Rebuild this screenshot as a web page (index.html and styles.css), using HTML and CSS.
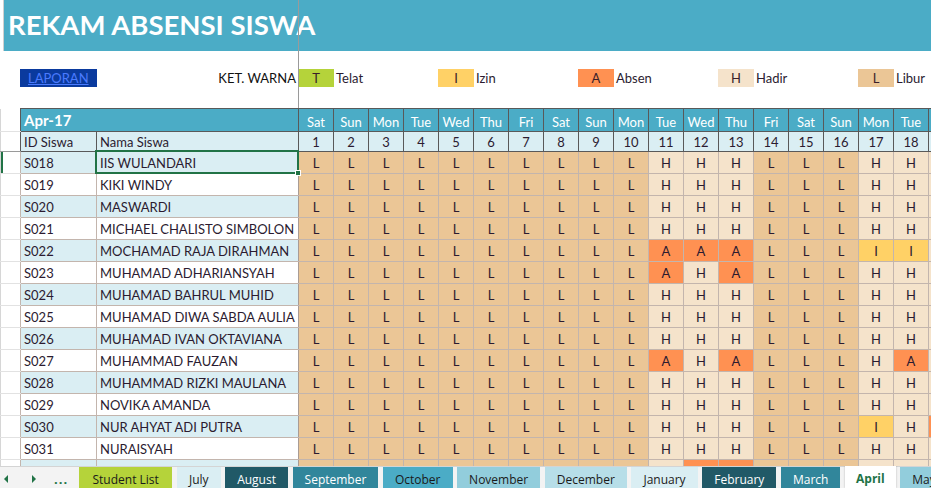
FILE: index.html
```html
<!DOCTYPE html>
<html>
<head>
<meta charset="utf-8">
<link rel="stylesheet" href="styles.css">
</head>
<body>
<div class="sheet">
  <div class="banner"><h1 class="title">REKAM ABSENSI SISWA</h1></div>
  <div class="legend">
    <span class="gutcell"></span>
    <span class="report"><a href="#">LAPORAN</a></span>
    <span class="ket">KET. WARNA</span>
    <span class="sw t">T</span><span class="lbl">Telat</span>
    <span class="sw i">I</span><span class="lbl">Izin</span>
    <span class="sw a">A</span><span class="lbl">Absen</span>
    <span class="sw h">H</span><span class="lbl">Hadir</span>
    <span class="sw l">L</span><span class="lbl">Libur</span>
  </div>
  <div class="gridwrap">
  <table class="grid">
    <colgroup>
      <col class="c-gut"><col class="c-id"><col class="c-name">
      <col class="c-day"><col class="c-day"><col class="c-day"><col class="c-day"><col class="c-day"><col class="c-day"><col class="c-day"><col class="c-day"><col class="c-day"><col class="c-day"><col class="c-day"><col class="c-day"><col class="c-day"><col class="c-day"><col class="c-day"><col class="c-day"><col class="c-day"><col class="c-day"><col class="c-day">
    </colgroup>
    <thead>
      <tr class="r-month">
        <td class="gut"></td><th colspan="2" class="month">Apr-17</th>
        <th class="dow">Sat</th><th class="dow">Sun</th><th class="dow">Mon</th><th class="dow">Tue</th><th class="dow">Wed</th><th class="dow">Thu</th><th class="dow">Fri</th><th class="dow">Sat</th><th class="dow">Sun</th><th class="dow">Mon</th><th class="dow">Tue</th><th class="dow">Wed</th><th class="dow">Thu</th><th class="dow">Fri</th><th class="dow">Sat</th><th class="dow">Sun</th><th class="dow">Mon</th><th class="dow">Tue</th><th class="dow">Wed</th>
      </tr>
      <tr class="r-sub">
        <td class="gut gut-freeze"></td><th class="sub">ID Siswa</th><th class="sub">Nama Siswa</th>
        <th class="num">1</th><th class="num">2</th><th class="num">3</th><th class="num">4</th><th class="num">5</th><th class="num">6</th><th class="num">7</th><th class="num">8</th><th class="num">9</th><th class="num">10</th><th class="num">11</th><th class="num">12</th><th class="num">13</th><th class="num">14</th><th class="num">15</th><th class="num">16</th><th class="num">17</th><th class="num">18</th><th class="num">19</th>
      </tr>
    </thead>
    <tbody>
      <tr class="blue"><td class="gut sel-row"></td><td class="id">S018</td><td class="name">IIS WULANDARI</td>
        <td class="l">L</td><td class="l">L</td><td class="l">L</td><td class="l">L</td><td class="l">L</td><td class="l">L</td><td class="l">L</td><td class="l">L</td><td class="l">L</td><td class="l">L</td><td class="h">H</td><td class="h">H</td><td class="h">H</td><td class="l">L</td><td class="l">L</td><td class="l">L</td><td class="h">H</td><td class="h">H</td><td class="h">H</td></tr>
      <tr class="white"><td class="gut"></td><td class="id">S019</td><td class="name">KIKI WINDY</td>
        <td class="l">L</td><td class="l">L</td><td class="l">L</td><td class="l">L</td><td class="l">L</td><td class="l">L</td><td class="l">L</td><td class="l">L</td><td class="l">L</td><td class="l">L</td><td class="h">H</td><td class="h">H</td><td class="h">H</td><td class="l">L</td><td class="l">L</td><td class="l">L</td><td class="h">H</td><td class="h">H</td><td class="h">H</td></tr>
      <tr class="blue"><td class="gut"></td><td class="id">S020</td><td class="name">MASWARDI</td>
        <td class="l">L</td><td class="l">L</td><td class="l">L</td><td class="l">L</td><td class="l">L</td><td class="l">L</td><td class="l">L</td><td class="l">L</td><td class="l">L</td><td class="l">L</td><td class="h">H</td><td class="h">H</td><td class="h">H</td><td class="l">L</td><td class="l">L</td><td class="l">L</td><td class="h">H</td><td class="h">H</td><td class="h">H</td></tr>
      <tr class="white"><td class="gut"></td><td class="id">S021</td><td class="name">MICHAEL CHALISTO SIMBOLON</td>
        <td class="l">L</td><td class="l">L</td><td class="l">L</td><td class="l">L</td><td class="l">L</td><td class="l">L</td><td class="l">L</td><td class="l">L</td><td class="l">L</td><td class="l">L</td><td class="h">H</td><td class="h">H</td><td class="h">H</td><td class="l">L</td><td class="l">L</td><td class="l">L</td><td class="h">H</td><td class="h">H</td><td class="h">H</td></tr>
      <tr class="blue"><td class="gut"></td><td class="id">S022</td><td class="name">MOCHAMAD RAJA DIRAHMAN</td>
        <td class="l">L</td><td class="l">L</td><td class="l">L</td><td class="l">L</td><td class="l">L</td><td class="l">L</td><td class="l">L</td><td class="l">L</td><td class="l">L</td><td class="l">L</td><td class="a">A</td><td class="a">A</td><td class="a">A</td><td class="l">L</td><td class="l">L</td><td class="l">L</td><td class="i">I</td><td class="i">I</td><td class="h">H</td></tr>
      <tr class="white"><td class="gut"></td><td class="id">S023</td><td class="name">MUHAMAD ADHARIANSYAH</td>
        <td class="l">L</td><td class="l">L</td><td class="l">L</td><td class="l">L</td><td class="l">L</td><td class="l">L</td><td class="l">L</td><td class="l">L</td><td class="l">L</td><td class="l">L</td><td class="a">A</td><td class="h">H</td><td class="a">A</td><td class="l">L</td><td class="l">L</td><td class="l">L</td><td class="h">H</td><td class="h">H</td><td class="h">H</td></tr>
      <tr class="blue"><td class="gut"></td><td class="id">S024</td><td class="name">MUHAMAD BAHRUL MUHID</td>
        <td class="l">L</td><td class="l">L</td><td class="l">L</td><td class="l">L</td><td class="l">L</td><td class="l">L</td><td class="l">L</td><td class="l">L</td><td class="l">L</td><td class="l">L</td><td class="h">H</td><td class="h">H</td><td class="h">H</td><td class="l">L</td><td class="l">L</td><td class="l">L</td><td class="h">H</td><td class="h">H</td><td class="h">H</td></tr>
      <tr class="white"><td class="gut"></td><td class="id">S025</td><td class="name">MUHAMAD DIWA SABDA AULIA</td>
        <td class="l">L</td><td class="l">L</td><td class="l">L</td><td class="l">L</td><td class="l">L</td><td class="l">L</td><td class="l">L</td><td class="l">L</td><td class="l">L</td><td class="l">L</td><td class="h">H</td><td class="h">H</td><td class="h">H</td><td class="l">L</td><td class="l">L</td><td class="l">L</td><td class="h">H</td><td class="h">H</td><td class="h">H</td></tr>
      <tr class="blue"><td class="gut"></td><td class="id">S026</td><td class="name">MUHAMAD IVAN OKTAVIANA</td>
        <td class="l">L</td><td class="l">L</td><td class="l">L</td><td class="l">L</td><td class="l">L</td><td class="l">L</td><td class="l">L</td><td class="l">L</td><td class="l">L</td><td class="l">L</td><td class="h">H</td><td class="h">H</td><td class="h">H</td><td class="l">L</td><td class="l">L</td><td class="l">L</td><td class="h">H</td><td class="h">H</td><td class="h">H</td></tr>
      <tr class="white"><td class="gut"></td><td class="id">S027</td><td class="name">MUHAMMAD FAUZAN</td>
        <td class="l">L</td><td class="l">L</td><td class="l">L</td><td class="l">L</td><td class="l">L</td><td class="l">L</td><td class="l">L</td><td class="l">L</td><td class="l">L</td><td class="l">L</td><td class="a">A</td><td class="h">H</td><td class="a">A</td><td class="l">L</td><td class="l">L</td><td class="l">L</td><td class="h">H</td><td class="a">A</td><td class="h">H</td></tr>
      <tr class="blue"><td class="gut"></td><td class="id">S028</td><td class="name">MUHAMMAD RIZKI MAULANA</td>
        <td class="l">L</td><td class="l">L</td><td class="l">L</td><td class="l">L</td><td class="l">L</td><td class="l">L</td><td class="l">L</td><td class="l">L</td><td class="l">L</td><td class="l">L</td><td class="h">H</td><td class="h">H</td><td class="h">H</td><td class="l">L</td><td class="l">L</td><td class="l">L</td><td class="h">H</td><td class="h">H</td><td class="h">H</td></tr>
      <tr class="white"><td class="gut"></td><td class="id">S029</td><td class="name">NOVIKA AMANDA</td>
        <td class="l">L</td><td class="l">L</td><td class="l">L</td><td class="l">L</td><td class="l">L</td><td class="l">L</td><td class="l">L</td><td class="l">L</td><td class="l">L</td><td class="l">L</td><td class="h">H</td><td class="h">H</td><td class="h">H</td><td class="l">L</td><td class="l">L</td><td class="l">L</td><td class="h">H</td><td class="h">H</td><td class="h">H</td></tr>
      <tr class="blue"><td class="gut"></td><td class="id">S030</td><td class="name">NUR AHYAT ADI PUTRA</td>
        <td class="l">L</td><td class="l">L</td><td class="l">L</td><td class="l">L</td><td class="l">L</td><td class="l">L</td><td class="l">L</td><td class="l">L</td><td class="l">L</td><td class="l">L</td><td class="h">H</td><td class="h">H</td><td class="h">H</td><td class="l">L</td><td class="l">L</td><td class="l">L</td><td class="i">I</td><td class="h">H</td><td class="a">A</td></tr>
      <tr class="white"><td class="gut"></td><td class="id">S031</td><td class="name">NURAISYAH</td>
        <td class="l">L</td><td class="l">L</td><td class="l">L</td><td class="l">L</td><td class="l">L</td><td class="l">L</td><td class="l">L</td><td class="l">L</td><td class="l">L</td><td class="l">L</td><td class="h">H</td><td class="h">H</td><td class="h">H</td><td class="l">L</td><td class="l">L</td><td class="l">L</td><td class="h">H</td><td class="h">H</td><td class="h">H</td></tr>
      <tr class="blue"><td class="gut"></td><td class="id">S032</td><td class="name">RATIHS RAWIN NIMA</td>
        <td class="l">L</td><td class="l">L</td><td class="l">L</td><td class="l">L</td><td class="l">L</td><td class="l">L</td><td class="l">L</td><td class="l">L</td><td class="l">L</td><td class="l">L</td><td class="h">H</td><td class="a">A</td><td class="a">A</td><td class="l">L</td><td class="l">L</td><td class="l">L</td><td class="h">H</td><td class="h">H</td><td class="h">H</td></tr>
    </tbody>
  </table>
  <div class="selection"><span class="handle"></span></div>
  </div>
  <div class="freeze-v"></div>
  <div class="tabbar">
    <span class="nav">
      <svg width="8" height="10" viewBox="0 0 8 10"><path d="M6 1 L2 5 L6 9 Z" fill="#217346"/></svg>
      <svg width="8" height="10" viewBox="0 0 8 10"><path d="M2 1 L6 5 L2 9 Z" fill="#217346"/></svg>
      <span class="dots">...</span>
    </span>
    <span class="tab t-green">Student List</span>
    <span class="tab t-pale">July</span>
    <span class="tab t-dark">August</span>
    <span class="tab t-mid">September</span>
    <span class="tab t-teal">October</span>
    <span class="tab t-sky">November</span>
    <span class="tab t-light">December</span>
    <span class="tab t-pale">January</span>
    <span class="tab t-dark">February</span>
    <span class="tab t-mid">March</span>
    <span class="tab t-active">April</span>
    <span class="tab t-sky">May</span>
  </div>
</div>
</body>
</html>
```
FILE: styles.css
```css
* { box-sizing: border-box; }
html, body { margin: 0; padding: 0; background: #fff; }
body { width: 931px; height: 488px; overflow: hidden; }

.sheet {
  position: relative;
  width: 931px;
  height: 488px;
  overflow: hidden;
  font-family: Lato, "Liberation Sans", sans-serif;
  color: #2b1b30;
  display: flex;
  flex-direction: column;
}

.banner {
  height: 51px;
  background: #4bacc6;
  margin-left: 3px;
  border-left: 1px solid #d0d0d0;
  flex: none;
}
.title {
  margin: 0;
  padding: 8px 0 0 4px;
  font-family: Lato, "Liberation Sans", sans-serif;
  font-weight: 700;
  font-size: 27.5px;
  line-height: 34px;
  letter-spacing: 0;
  color: #fff;
  white-space: nowrap;
}

.legend {
  flex: none;
  height: 57px;
  padding-top: 18px;
  display: grid;
  grid-template-columns: 20px 76px 202px repeat(24, 35px);
  grid-template-rows: 18px;
  align-items: stretch;
  font-size: 13px;
  width: 1138px;
}
.report {
  grid-column: 2;
  background: #0a3a9e;
  display: flex;
  align-items: center;
  padding-left: 8px;
  margin-right: -1px;
}
.report a {
  color: #4a7bff;
  text-decoration: underline;
  font-size: 13px;
}
.ket {
  grid-column: 3;
  text-align: right;
  padding-right: 2px;
  line-height: 18px;
  color: #111;
}
.sw {
  text-align: center;
  line-height: 18px;
  margin-right: -1px;
  color: #3a1f2a;
}
.lbl {
  grid-column: span 3;
  line-height: 18px;
  padding-left: 3px;
  color: #2b1b30;
}
.sw.t { background: #b5d33a; }
.sw.i { background: #ffd166; }
.sw.a { background: #ff9152; }
.sw.h { background: #f5e3cb; }
.sw.l { background: #ebc696; }

.gridwrap {
  position: relative;
  flex: none;
  height: 358px;
  overflow: hidden;
}
.grid {
  border-collapse: collapse;
  table-layout: fixed;
  width: 963px;
  font-size: 13px;
}
.c-gut { width: 20px; }
.c-id { width: 76px; }
.c-name { width: 202px; }
.c-day { width: 35px; }

.grid td, .grid th {
  padding: 0;
  overflow: hidden;
  white-space: nowrap;
  font-weight: 400;
}
.grid td.gut {
  border: none;
  border-bottom: 1px solid #e2e2e2;
  border-left: 1px solid #d6d6d6;
  background: #fff;
}
.grid td.gut-freeze { border-bottom: 1px solid #9a9a9a; }
.grid td.sel-row { box-shadow: inset 2px 0 0 #217346; }

.r-month th { height: 23px; }
.r-sub th { height: 20px; }
.grid tbody td { height: 22px; }

.month {
  background: #4bacc6;
  color: #fff;
  font-weight: 700 !important;
  font-size: 15px;
  text-align: left;
  padding-left: 3px !important;
  border: 1px solid #595959;
}
.dow {
  background: #4bacc6;
  color: #fff;
  text-align: center;
  border: 1px solid #595959;
  vertical-align: bottom;
  padding-bottom: 1px !important;
}
.sub {
  background: #daeef3;
  text-align: left;
  padding-left: 3px !important;
  border: 1px solid #595959;
}
.num {
  background: #daeef3;
  text-align: center;
  border: 1px solid #595959;
}

.grid tbody td:not(.gut) {
  border: 1px solid #c3b5ad;
  text-align: center;
}
.grid tbody td.id, .grid tbody td.name {
  text-align: left;
  padding-left: 3px;
  vertical-align: bottom;
  padding-bottom: 2px;
}
.grid tbody td.name { border-right-color: #a99c95; }
.blue td.id, .blue td.name { background: #daeef3; }
.white td.id, .white td.name { background: #fff; }

.grid td.l { background: #ebc696; }
.grid td.h { background: #f5e3cb; }
.grid td.a { background: #ff9152; }
.grid td.i { background: #ffd166; }

.selection {
  position: absolute;
  left: 95px;
  top: 42px;
  width: 204px;
  height: 24px;
  border: 2px solid #217346;
  pointer-events: none;
}
.handle {
  position: absolute;
  right: -4px;
  bottom: -4px;
  width: 6px;
  height: 6px;
  background: #217346;
  border: 1px solid #fff;
}

.freeze-v {
  position: absolute;
  left: 298px;
  top: 0;
  width: 1px;
  height: 108px;
  background: #9a9a9a;
}

.tabbar {
  flex: none;
  height: 22px;
  display: flex;
  align-items: stretch;
  background: #f3f3f3;
  border-top: 1px solid #d4d4d4;
  font-family: "Open Sans", "Noto Sans", sans-serif;
  font-size: 12px;
  white-space: nowrap;
}
.nav {
  width: 79px;
  display: flex;
  align-items: center;
  padding-left: 2px;
  padding-top: 3px;
  gap: 20px;
  flex: none;
}
.nav svg { flex: none; }
.dots {
  color: #217346;
  font-weight: 700;
  font-size: 13px;
  letter-spacing: 1px;
  margin-left: -4px;
  line-height: 14px;
}
.tab {
  flex: none;
  display: flex;
  align-items: center;
  justify-content: center;
  padding: 3px 12px 0;
  margin-right: 4.6px;
  color: #1a1a1a;
}
.t-green { background: #b5d33a; padding: 3px 13.5px 0; }
.t-pale { background: #daeef3; }
.t-dark { background: #215967; color: #fff; }
.t-mid { background: #31869b; color: #fff; }
.t-teal { background: #4bacc6; }
.t-sky { background: #92cddc; }
.t-light { background: #b7dee8; }
.t-active {
  background: #fff;
  color: #217346;
  font-weight: 700;
  margin-top: -1px;
  padding: 3px 11px 0;
  box-shadow: 0 0 2px rgba(0,0,0,0.25);
}
```
